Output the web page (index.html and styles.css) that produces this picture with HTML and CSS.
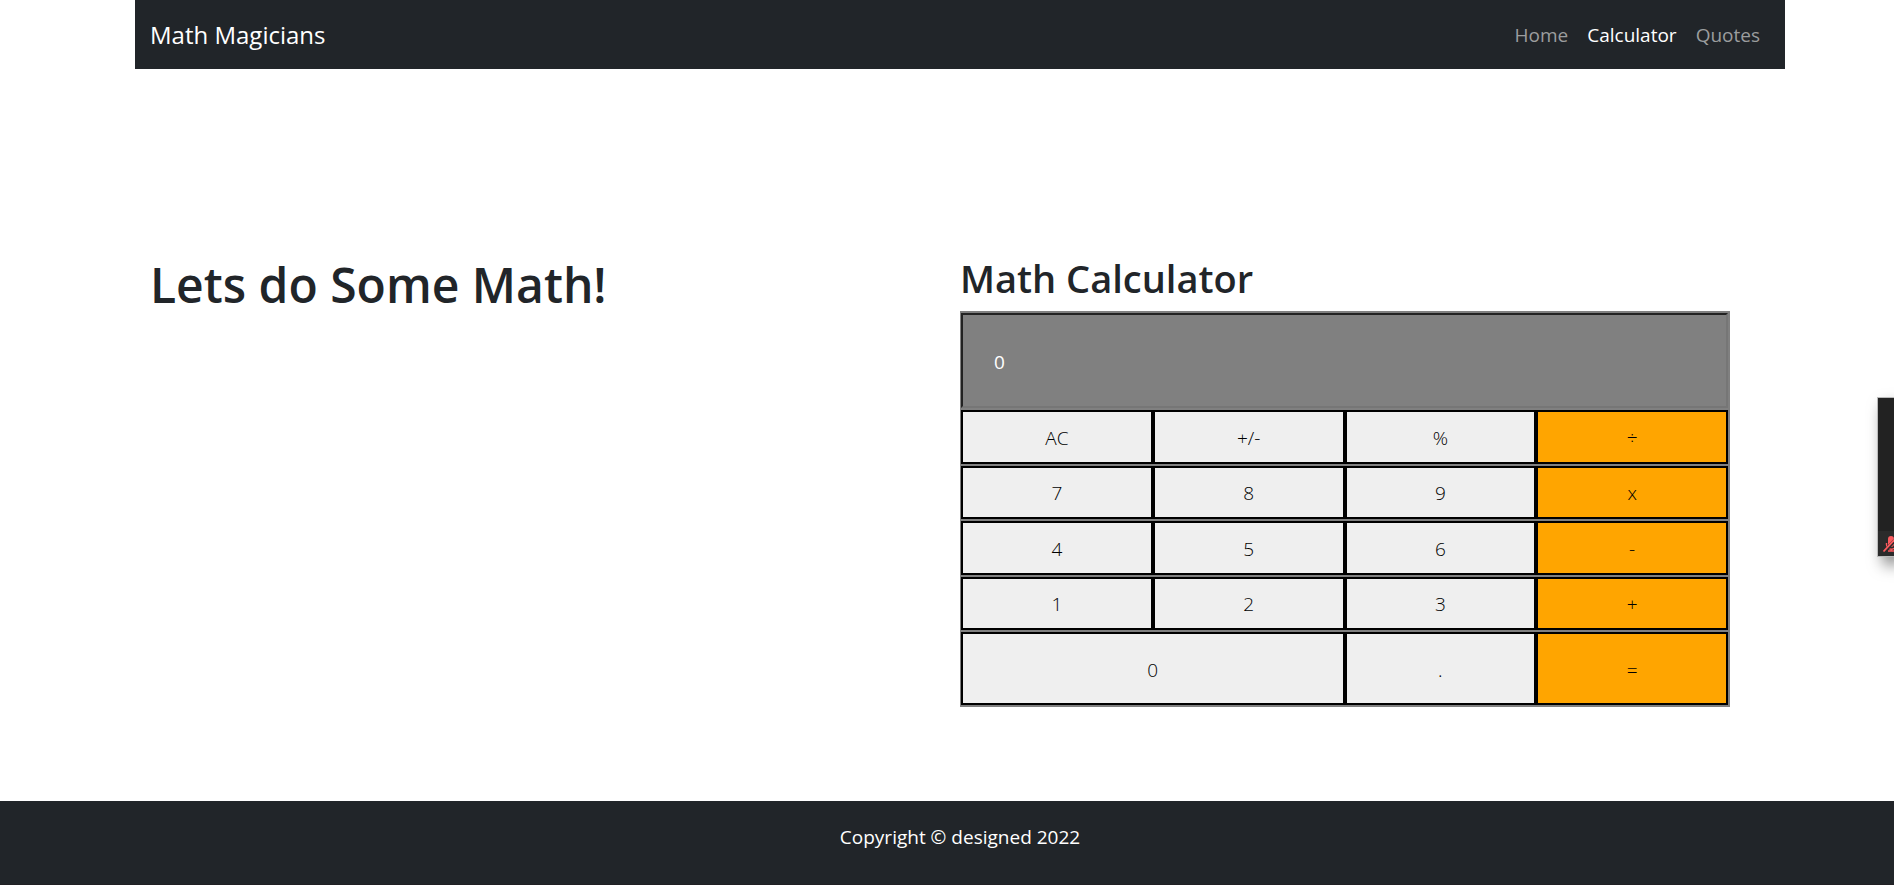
FILE: index.html
```html
<!DOCTYPE html>
<html lang="en">
<head>
<meta charset="utf-8">
<title>Math Magicians</title>
<link rel="stylesheet" href="styles.css">
</head>
<body>
<header class="wrap">
  <nav class="navbar">
    <a class="brand" href="#">Math Magicians</a>
    <div class="links">
      <a href="#home">Home</a>
      <a class="active" href="#calculator">Calculator</a>
      <a href="#quotes">Quotes</a>
    </div>
  </nav>
</header>
<main class="wrap main">
  <h1>Lets do Some Math!</h1>
  <section class="calc-section">
    <h2 id="calc-title">Math Calculator</h2>
    <div class="calculator">
      <input class="display" type="text" value="0" readonly aria-labelledby="calc-title">
      <button>AC</button><button>+/-</button><button>%</button><button class="op">÷</button>
      <button>7</button><button>8</button><button>9</button><button class="op">x</button>
      <button>4</button><button>5</button><button>6</button><button class="op">-</button>
      <button>1</button><button>2</button><button>3</button><button class="op">+</button>
      <button class="zero">0</button><button>.</button><button class="op">=</button>
    </div>
  </section>
</main>
<footer class="footer"><p>Copyright © designed 2022</p></footer>
<aside class="call-panel" aria-label="Microphone muted">
  <div class="call-bar">
    <svg width="16" height="25" viewBox="0 0 16 25" fill="none" stroke="#fa5a5e" stroke-width="1.4">
      <rect x="10" y="5" width="6" height="11" rx="3" fill="#fa5a5e" stroke="none"/>
      <path d="M8.500 12v1.500a4.700 4.700 0 0 0 9.400 0V12M13.200 18v2M10 20h7"/>
      <path d="M6 21L18 8" stroke="#2b2b2b" stroke-width="3.600"/>
      <path d="M5.500 20.500L17.500 7.500" stroke-width="1.800"/>
    </svg>
  </div>
</aside>
</body>
</html>
```
FILE: styles.css
```css
* {
  box-sizing: border-box;
}

body {
  margin: 0;
  min-height: 100vh;
  display: flex;
  flex-direction: column;
  overflow-x: hidden;
  background: #fff;
  color: #212529;
  font-family: "Segoe UI", "Open Sans", "Noto Sans", sans-serif;
  font-size: 19px;
  line-height: 30px;
}

.wrap {
  padding: 0 109px 0 135px;
}

.navbar {
  display: flex;
  align-items: center;
  justify-content: space-between;
  padding: 15px;
  min-height: 69px;
  background: #212529;
}

.brand {
  color: #fff;
  font-size: 24px;
  text-decoration: none;
}

.links {
  display: flex;
  gap: 19px;
  padding-right: 10px;
}

.links a {
  color: #9b9d9e;
  text-decoration: none;
}

.links .active {
  color: #fff;
}

.main {
  flex: 1;
  display: grid;
  grid-template-columns: 1fr 1fr;
  align-items: start;
  padding-top: 186px;
  padding-bottom: 94px;
}

h1,
h2 {
  margin: 0;
  font-weight: 600;
}

h1 {
  padding-left: 15px;
  font-size: 48px;
  line-height: 60px;
}

h2 {
  margin-bottom: 10px;
  font-size: 38px;
  line-height: 46px;
}

.calc-section {
  padding-right: 55px;
}

.calculator {
  display: grid;
  grid-template-columns: repeat(4, 1fr);
  grid-template-rows: 95px repeat(4, 1fr) 73px;
  row-gap: 2px;
  min-height: 396px;
  padding: 2px 2px 2px 1px;
  background: #808080;
}

.display {
  grid-column: 1 / -1;
  width: 100%;
  padding: 2px 31px 0;
  border: 2px solid;
  border-color: #222 #767676 #767676 #222;
  border-radius: 0;
  outline: none;
  background: #808080;
  color: #fff;
  font: inherit;
}

.calculator button {
  min-width: 0;
  padding: 2px 0 0;
  border: 2px solid #000;
  border-radius: 0;
  background: #efefef;
  color: #000;
  font: inherit;
  font-weight: 300;
}

.calculator .op {
  background: #ffa500;
}

.calculator .zero {
  grid-column: span 2;
}

.footer {
  min-height: 84px;
  padding: 21px 0 32px 26px;
  border-bottom: 1px solid #212024;
  background: #212529;
  color: #fff;
  text-align: center;
}

.footer p {
  margin: 0;
}

.call-panel {
  position: fixed;
  top: 398px;
  right: 0;
  display: flex;
  align-items: flex-end;
  width: 16px;
  height: 158px;
  background: #222;
  box-shadow: 0 0 0 1px #bbb, 6px 8px 16px rgba(0, 0, 0, 0.6);
}

.call-bar {
  display: flex;
  width: 100%;
  height: 25px;
  overflow: hidden;
  background: #2b2b2b;
}
```
